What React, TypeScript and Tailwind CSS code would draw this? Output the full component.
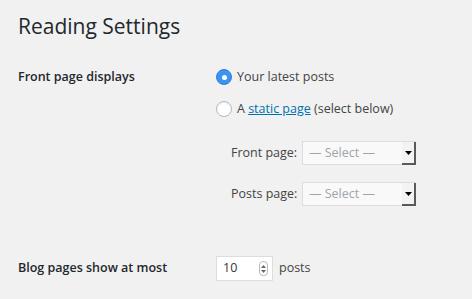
import React from 'react';

function Radio({ checked }: { checked?: boolean }) {
  return checked ? (
    <span className="w-4 h-4 rounded-full bg-[#3b93f2] border border-[#2f7fd6] flex items-center justify-center shrink-0">
      <span className="w-[5px] h-[5px] rounded-full bg-white" />
    </span>
  ) : (
    <span className="w-4 h-4 rounded-full bg-white border border-[#b4b9be] shadow-[inset_0_1px_2px_rgba(0,0,0,0.07)] shrink-0" />
  );
}

function FakeSelect() {
  return (
    <div className="flex w-[114px] h-[24px] border border-[#dddddd] bg-[#f9f9f9]">
      <span className="flex-1 flex items-center pl-[6px] text-[#a0a5aa] text-[12.5px] whitespace-nowrap">— Select —</span>
      <span className="w-[14px] flex items-center justify-center bg-[#f3f3f3] border-r-2 border-b-2 border-[#5a5a5a] -mr-px -mb-px">
        <svg width="7" height="4" viewBox="0 0 7 4">
          <path d="M0 0h7L3.5 4z" fill="#000" />
        </svg>
      </span>
    </div>
  );
}

export default function App() {
  return (
    <div
      className="w-[472px] h-[299px] bg-[#f1f1f1] text-[#444] text-[12.5px] overflow-hidden px-[18px]"
      style={{ fontFamily: '"Open Sans", sans-serif' }}
    >
      <h1 className="pt-[12px] text-[21px] leading-[28px] text-[#23282d]">Reading Settings</h1>

      <div className="flex mt-[28px]">
        <div className="w-[198px] font-semibold text-[#23282d] leading-[18px]">
          Front page displays
        </div>
        <div className="flex flex-col">
          <label className="flex items-center gap-[5px] h-[18px]">
            <Radio checked />
            <span>Your latest posts</span>
          </label>
          <label className="flex items-center gap-[5px] h-[18px] mt-[14px]">
            <Radio />
            <span className="whitespace-nowrap">
              A <span className="text-[#0073aa] underline">static page</span> (select below)
            </span>
          </label>
          <div className="flex flex-col ml-[15px] mt-[23px] gap-[17px]">
            <div className="flex items-center gap-[5px]">
              <span className="whitespace-nowrap w-[66px]">Front page:</span>
              <FakeSelect />
            </div>
            <div className="flex items-center gap-[5px]">
              <span className="whitespace-nowrap w-[66px]">Posts page:</span>
              <FakeSelect />
            </div>
          </div>
        </div>
      </div>

      <div className="flex items-center mt-[50px]">
        <div className="w-[198px] font-semibold text-[#23282d] whitespace-nowrap">Blog pages show at most</div>
        <div className="flex items-center gap-[6px]">
          <div className="flex items-center justify-between w-[57px] h-[25px] bg-white border border-[#dddddd] pl-[6px] pr-[4px]">
            <span className="text-[#32373c]">10</span>
            <span className="w-[9px] h-[15px] rounded-[4px] border border-[#bbb] flex flex-col items-center justify-center gap-[2px]">
              <svg width="5" height="3" viewBox="0 0 5 3"><path d="M0 3L2.5 0 5 3z" fill="#666" /></svg>
              <svg width="5" height="3" viewBox="0 0 5 3"><path d="M0 0h5L2.5 3z" fill="#666" /></svg>
            </span>
          </div>
          <span>posts</span>
        </div>
      </div>
    </div>
  );
}
